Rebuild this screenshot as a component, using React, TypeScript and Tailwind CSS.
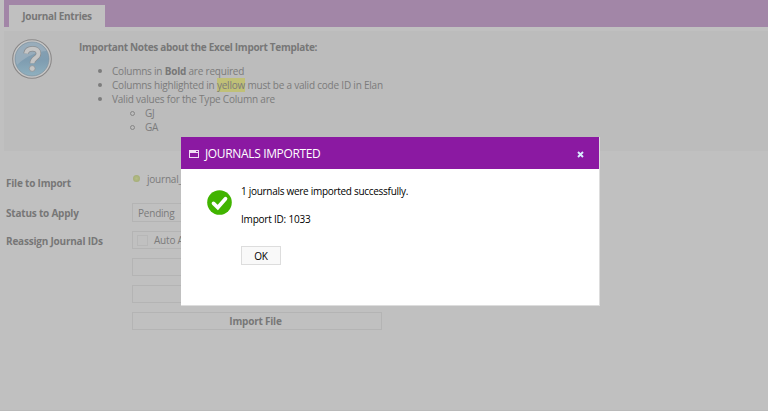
import type { ReactNode } from "react";

function HelpIcon() {
  return (
    <svg width="40" height="40" viewBox="0 0 40 40" className="block">
      <defs>
        <linearGradient id="help-fill" x1="0" y1="0" x2="0" y2="1">
          <stop offset="0" stopColor="#88a0b2" />
          <stop offset="0.55" stopColor="#7f9db1" />
          <stop offset="1" stopColor="#8fb0bf" />
        </linearGradient>
      </defs>
      <circle cx="20" cy="20" r="19.3" fill="#c6c6c6" stroke="#898787" strokeWidth="1.1" />
      <circle cx="20" cy="20" r="17" fill="url(#help-fill)" stroke="#7e919e" strokeWidth="0.7" />
      <path d="M3.500 20a16.500 16.500 0 0 1 31-8C27 12 14 17 5 26a16 16 0 0 1-1.500-6Z" fill="#a5b6c2" opacity="0.6" />
      <path d="M14 14.500C14.500 10.800 17 9.700 20.500 9.700C24.700 9.700 26.500 12 26.500 14.800C26.500 19 20.300 19 20.300 24.300" fill="none" stroke="#8b8e90" strokeWidth="5.400" />
      <path d="M14 14.500C14.500 10.800 17 9.700 20.500 9.700C24.700 9.700 26.500 12 26.500 14.800C26.500 19 20.300 19 20.300 24.300" fill="none" stroke="#c5c5c5" strokeWidth="4" />
      <circle cx="20.200" cy="29.500" r="2.900" fill="#c5c5c5" stroke="#8b8e90" strokeWidth="0.7" />
    </svg>
  );
}

function Item({ children, nested = false }: { children: ReactNode; nested?: boolean }) {
  return (
    <li className={nested ? "flex h-[14px] items-center pl-[52px]" : "flex h-[14px] items-center pl-5"}>
      <span
        className={
          nested
            ? "mr-[10px] size-[5px] shrink-0 rounded-full border border-[#858585]"
            : "mr-[10px] size-[4px] shrink-0 rounded-full bg-[#7c7c7c]"
        }
      />
      <span className="whitespace-pre">{children}</span>
    </li>
  );
}

const field = "flex w-[250px] items-center border border-[#b4b4b4]";

export default function App() {
  return (
    <div className="relative h-[411px] w-[768px] overflow-hidden bg-[#c0c0c0] font-['Open_Sans','Noto_Sans',sans-serif] text-[10px] leading-[14px] tracking-[-0.21px] text-[#7b7b7b]">
      <div className="flex h-full flex-col border-b border-[#bababa]">
        <header className="ml-1 flex h-[27px] shrink-0 items-end bg-[#a286a7] pl-[5px]">
          <div className="flex h-[22px] w-24 items-center justify-center bg-[#c0c0c0] font-bold text-[#777777]">
            <span className="tracking-[-0.3px] whitespace-nowrap">Journal Entries</span>
          </div>
        </header>

        <section className="mt-1 ml-1 flex h-[120px] shrink-0 bg-[#bcbcbc]">
          <div className="w-[74px] shrink-0 pt-2 pl-2">
            <HelpIcon />
          </div>
          <div className="pt-[9px]">
            <p className="pl-px font-bold tracking-[-0.31px] whitespace-nowrap text-[#777777]">Important Notes about the Excel Import Template:</p>
            <ul className="mt-[10px]">
              <Item>Columns in <b className="text-[#777777]">Bold</b> are required</Item>
              <Item>Columns highlighted in <span className="inline-block bg-[#c0c077]">yellow</span> must be a valid code ID in Elan</Item>
              <Item>Valid values for the Type Column are</Item>
              <Item nested>GJ</Item>
              <Item nested>GA</Item>
            </ul>
          </div>
        </section>

        <form className="flex pt-[19px] pl-[6px]">
          <div className="w-[126px] shrink-0 font-bold text-[#777777]">
            <p className="mt-[6px] h-[30px]">File to Import</p>
            <p className="h-7">Status to Apply</p>
            <p>Reassign Journal IDs</p>
          </div>
          <div className="flex flex-col">
            <div className="flex h-[33px] items-start pt-[2px]">
              <span className="mt-[3px] ml-[1px] size-[7px] rounded-full bg-[radial-gradient(circle,#b5bd86,#9fa873)]" />
              <span className="ml-[7px]">journal_import.xlsx</span>
            </div>
            <div className={`${field} h-[19px] pt-px pl-[5px]`}>Pending</div>
            <div className={`${field} mt-[9px] h-[18px] pl-1`}>
              <span className="mr-[6px] size-[11px] border border-[#b7b7b7]" />
              <span>Auto Assign</span>
            </div>
            <div className={`${field} mt-[9px] h-[18px]`} />
            <div className={`${field} mt-[9px] h-[18px]`} />
            <button type="button" className={`${field} mt-[9px] h-[18px] justify-center pr-[3px] font-bold text-[#777777]`}>
              Import File
            </button>
          </div>
        </form>
      </div>

      <div role="dialog" className="absolute top-[137px] left-[181px] flex h-[169px] w-[419px] flex-col border-r border-b border-[#dddddd] bg-white text-black">
        <div className="flex h-8 shrink-0 items-center bg-[#8b19a2] pt-[2px] pr-[15px] pl-2 text-white">
          <svg width="10" height="8" viewBox="0 0 10 8" shapeRendering="crispEdges">
            <path fill="#f0dcf4" d="M0 0h10v8H0zM1 3v4h8V3zM7 1v1h2V1z" fillRule="evenodd" />
          </svg>
          <span className="ml-[6px] text-[12px] leading-4 tracking-[-0.35px]">JOURNALS IMPORTED</span>
          <svg className="ml-auto" width="7" height="7" viewBox="0 0 7 7">
            <path d="M1 1l5 5M6 1L1 6" stroke="#d8edff" strokeWidth="1.900" />
          </svg>
        </div>
        <div className="flex pl-[26px]">
          <svg className="mt-[21px] shrink-0" width="25" height="25" viewBox="0 0 25 25">
            <circle cx="12.500" cy="12.500" r="12.300" fill="#41b400" />
            <path d="M6.500 13.400l4.300 4.100l7.700-8.800" fill="none" stroke="#fff" strokeWidth="3.700" strokeLinecap="round" />
          </svg>
          <div className="ml-[9px] pt-[15px]">
            <p className="tracking-[-0.29px] whitespace-nowrap">1 journals were imported successfully.</p>
            <p className="mt-[14px]">Import ID: 1033</p>
            <button type="button" className="mt-5 flex h-[19px] w-10 items-center justify-center border border-[#dddddd] bg-[#f9f9f9]">OK</button>
          </div>
        </div>
      </div>
    </div>
  );
}
